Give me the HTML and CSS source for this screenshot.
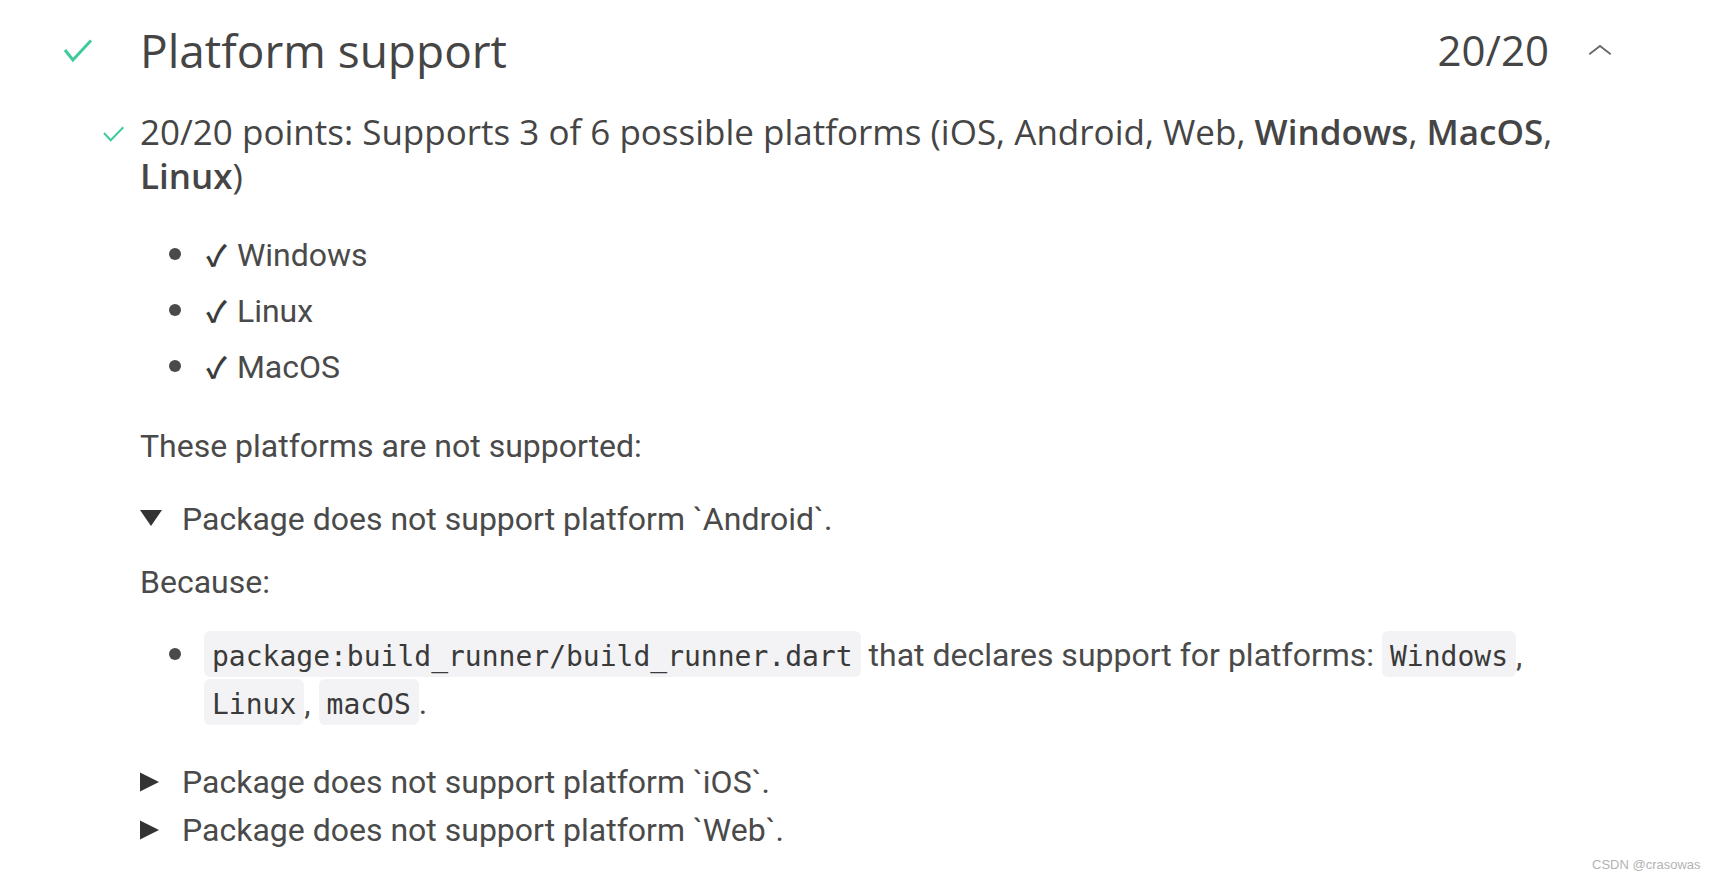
FILE: index.html
```html
<!DOCTYPE html>
<html lang="en">
<head>
<meta charset="utf-8">
<title>Platform support</title>
<link rel="stylesheet" href="styles.css">
</head>
<body>
<div class="page">
  <section class="report">
    <header class="report-header">
      <svg class="hdr-check" viewBox="0 0 32 32" aria-hidden="true"><polyline points="2,16 9.9,26 28,6.5" /></svg>
      <h2 class="title">Platform support</h2>
      <span class="score">20/20</span>
      <svg class="chevron" viewBox="0 0 40 40" aria-hidden="true"><polyline points="9.3,24.3 20,16 30.7,24.3" /></svg>
    </header>
    <div class="report-body">
      <div class="summary">
        <svg class="summary-check" viewBox="0 0 24 24" aria-hidden="true"><polyline points="4,10 10.7,17.2 23.3,4.3" /></svg>
        <p class="summary-text">20/20 points: Supports 3 of 6 possible platforms (iOS, Android, Web, <b>Windows</b>, <b>MacOS</b>, <b>Linux</b>)</p>
      </div>
      <ul class="bullets supported">
        <li><span class="li-text"><span class="tick">✓</span> Windows</span></li>
        <li><span class="li-text"><span class="tick">✓</span> Linux</span></li>
        <li><span class="li-text"><span class="tick">✓</span> MacOS</span></li>
      </ul>
      <p class="note">These platforms are not supported:</p>
      <details class="platform android" open>
        <summary><svg class="marker" viewBox="0 0 22 22" aria-hidden="true"><polygon points="0,2 22,2 11,18" /></svg><span>Package does not support platform `Android`.</span></summary>
        <p class="because">Because:</p>
        <ul class="bullets reasons">
          <li><span class="li-text"><code>package:build_runner/build_runner.dart</code> that declares support for platforms: <code>Windows</code>, <code>Linux</code>, <code>macOS</code>.</span></li>
        </ul>
      </details>
      <details class="platform ios">
        <summary><svg class="marker" viewBox="0 0 22 22" aria-hidden="true"><polygon points="0,1.5 19,11 0,20.5" /></svg><span>Package does not support platform `iOS`.</span></summary>
      </details>
      <details class="platform web">
        <summary><svg class="marker" viewBox="0 0 22 22" aria-hidden="true"><polygon points="0,1.5 19,11 0,20.5" /></svg><span>Package does not support platform `Web`.</span></summary>
      </details>
    </div>
  </section>
  <div class="watermark">CSDN @crasowas</div>
</div>
</body>
</html>
```
FILE: styles.css
```css
html, body {
  margin: 0;
  padding: 0;
  background: #ffffff;
}

body {
  color: #4a4a4a;
  font-family: Roboto, "Noto Sans", sans-serif;
}

.page {
  width: 1620px;
  padding-top: 22px;
}

/* ---------- header ---------- */
.report-header {
  display: flex;
  align-items: center;
  height: 56px;
  padding-left: 63px;
}

.hdr-check {
  width: 32px;
  height: 32px;
  flex-shrink: 0;
  margin-right: 45px;
}

.hdr-check polyline,
.summary-check polyline {
  fill: none;
  stroke: #3ecb9c;
  stroke-width: 3;
  stroke-linecap: butt;
  stroke-linejoin: miter;
}

.summary-check polyline {
  stroke-width: 2;
}

.title {
  flex: 1;
  margin: 0;
  font-family: "Open Sans", sans-serif;
  font-weight: 400;
  font-size: 46px;
  line-height: 56px;
  color: #454545;
}

.score {
  font-family: "Open Sans", sans-serif;
  font-size: 42px;
  line-height: 56px;
  color: #454545;
  margin-right: 31px;
}

.chevron {
  width: 40px;
  height: 40px;
  flex-shrink: 0;
}

.chevron polyline {
  fill: none;
  stroke: #6a6a6a;
  stroke-width: 1.8;
}

/* ---------- body ---------- */
.report-body {
  margin-left: 140px;
  width: 1460px;
}

.summary {
  display: flex;
  align-items: flex-start;
  margin: 32px 0 0 -40px;
}

.summary-check {
  width: 24px;
  height: 24px;
  flex-shrink: 0;
  margin: 13px 16px 0 0;
}

.summary-text {
  margin: 0;
  font-family: "Open Sans", sans-serif;
  font-size: 35px;
  line-height: 44px;
  color: #454545;
}

.summary-text b {
  font-weight: 600;
}

.bullets {
  list-style: none;
  margin: 29px 0 0 29px;
  padding: 0;
  font-size: 32px;
}

.bullets li {
  display: flex;
  align-items: flex-start;
}

.bullets li::before {
  content: "";
  width: 12px;
  height: 12px;
  border-radius: 50%;
  background: #4a4a4a;
  flex-shrink: 0;
  margin-right: 23px;
}

.supported li {
  line-height: 56px;
}

.supported li::before {
  margin-top: 21px;
}

.tick {
  font-family: "Noto Sans CJK JP", "DejaVu Sans", sans-serif;
  font-weight: 700;
  font-size: 29px;
  line-height: 0;
  color: #3c3c3c;
  margin: 0 2px 0 2px;
}

.note,
.because {
  margin: 31px 0 0;
  font-size: 32px;
  line-height: 40px;
}

.platform {
  margin: 0;
}

.platform.android {
  margin-top: 29px;
}

.platform.ios {
  margin-top: 31px;
}

.platform summary {
  display: flex;
  align-items: center;
  list-style: none;
  font-size: 32px;
  line-height: 48px;
  cursor: pointer;
}

.platform summary::-webkit-details-marker {
  display: none;
}

.marker {
  width: 22px;
  height: 22px;
  flex-shrink: 0;
  margin-right: 20px;
}

.marker polygon {
  fill: #333333;
}

.because {
  margin-top: 19px;
}

.reasons {
  margin-top: 29px;
}

.reasons li {
  line-height: 48px;
}

.reasons li::before {
  margin-top: 17px;
}

code {
  font-family: "DejaVu Sans Mono", "Liberation Mono", monospace;
  font-size: 28px;
  line-height: 0;
  color: #3a3a3a;
  background: #f3f3f5;
  border-radius: 6px;
  padding: 9px 8px 4px;
}

.watermark {
  position: absolute;
  left: 1592px;
  top: 857px;
  font-family: "Liberation Sans", Arial, sans-serif;
  font-size: 13px;
  color: #b3b3b3;
}
```
